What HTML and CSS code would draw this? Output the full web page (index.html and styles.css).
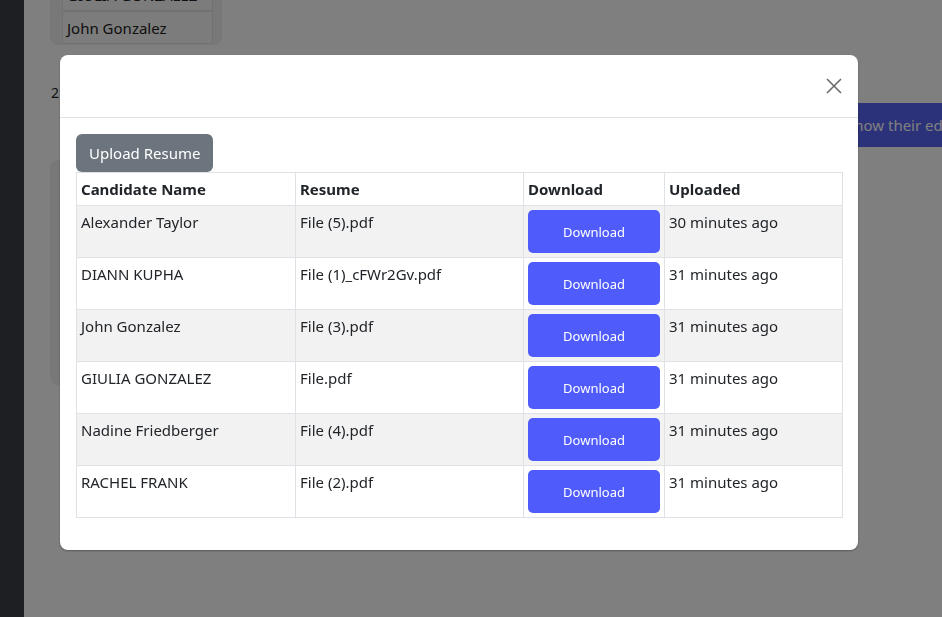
FILE: index.html
```html
<!DOCTYPE html>
<html>
<head>
<meta charset="utf-8">
<link rel="stylesheet" href="styles.css">
</head>
<body>
<div class="page">
  <aside class="sidebar"></aside>
  <main class="content">
    <div class="card card-top">
      <div class="cell">GIULIA GONZALEZ</div>
      <div class="cell">John Gonzalez</div>
    </div>
    <div class="count">2</div>
    <div class="banner">Show their education</div>
    <div class="card card-second"></div>
  </main>
</div>

<div class="backdrop"></div>

<div class="modal">
  <div class="modal-header">
    <button class="close" aria-label="Close">
      <svg width="16" height="16" viewBox="0 0 16 16"><path d="M1 1L15 15M15 1L1 15" stroke="#6c6c6c" stroke-width="1.6" fill="none"/></svg>
    </button>
  </div>
  <div class="modal-body">
    <button class="btn-upload">Upload Resume</button>
    <table class="tbl">
      <colgroup>
        <col class="c1"><col class="c2"><col class="c3"><col class="c4">
      </colgroup>
      <thead>
        <tr><th>Candidate Name</th><th>Resume</th><th>Download</th><th>Uploaded</th></tr>
      </thead>
      <tbody>
        <tr><td>Alexander Taylor</td><td>File (5).pdf</td><td><button class="btn-dl">Download</button></td><td>30 minutes ago</td></tr>
        <tr><td>DIANN KUPHA</td><td>File (1)_cFWr2Gv.pdf</td><td><button class="btn-dl">Download</button></td><td>31 minutes ago</td></tr>
        <tr><td>John Gonzalez</td><td>File (3).pdf</td><td><button class="btn-dl">Download</button></td><td>31 minutes ago</td></tr>
        <tr><td>GIULIA GONZALEZ</td><td>File.pdf</td><td><button class="btn-dl">Download</button></td><td>31 minutes ago</td></tr>
        <tr><td>Nadine Friedberger</td><td>File (4).pdf</td><td><button class="btn-dl">Download</button></td><td>31 minutes ago</td></tr>
        <tr><td>RACHEL FRANK</td><td>File (2).pdf</td><td><button class="btn-dl">Download</button></td><td>31 minutes ago</td></tr>
      </tbody>
    </table>
  </div>
</div>
</body>
</html>
```

FILE: styles.css
```css
* { box-sizing: border-box; }
html, body { margin: 0; padding: 0; height: 100%; overflow: hidden; }
body {
  font-family: "Noto Sans", "Open Sans", sans-serif;
  font-size: 15px;
  color: #212529;
  background: #fff;
}
.page { display: flex; height: 100%; }
.sidebar { width: 24px; flex: none; background: #3d3f45; }
.content { flex: 1; position: relative; }
.card-top {
  position: absolute; left: 26px; top: -30px; width: 172px; height: 75px;
  background: #f0f0f1; border-radius: 8px; padding: 8px 9px 0 12px;
}
.cell {
  height: 33px; line-height: 33px; padding-left: 4px;
  background: #f9f9f9; border: 1px solid #e4e4e4; color: #222;
  font-size: 15px; white-space: nowrap; overflow: hidden;
}
.count { position: absolute; left: 27px; top: 83px; font-size: 14px; }
.banner {
  position: absolute; left: 600px; right: 0; top: 103px; height: 44px;
  background: #5664f2; color: #fff; line-height: 44px; padding-left: 222px;
  white-space: nowrap; overflow: hidden; font-size: 15px;
}
.card-second {
  position: absolute; left: 26px; top: 160px; width: 172px; height: 225px;
  background: #f0f0f1; border-radius: 8px;
}
.backdrop { position: fixed; inset: 0; background: rgba(0,0,0,0.5); }
.modal {
  position: fixed; left: 60px; top: 55px; width: 798px;
  background: #fff; border-radius: 8px; box-shadow: 0 1px 2px rgba(0,0,0,0.3);
}
.modal-header {
  height: 63px; border-bottom: 1px solid #dee2e6;
  display: flex; justify-content: flex-end; align-items: center; padding-right: 16px;
}
.close {
  border: 0; background: transparent; padding: 0; width: 16px; height: 16px;
  display: flex;
}
.modal-body { padding: 16px; }
.btn-upload {
  font-family: inherit; font-size: 15px; color: #fff; background: #6c757d;
  border: 0; border-radius: 6px; height: 38px; padding: 0 13px; line-height: 38px;
  display: block;
}
.tbl {
  width: 766px; border-collapse: collapse; margin-bottom: 16px; table-layout: fixed;
}
.c1 { width: 219px; } .c2 { width: 228px; } .c3 { width: 141px; } .c4 { width: 178px; }
.tbl th, .tbl td {
  border: 1px solid #dee2e6; padding: 4px; text-align: left; vertical-align: top;
  line-height: 24px; font-size: 15px;
}
.tbl th { font-weight: 700; }
.tbl tbody tr:nth-child(odd) td { background: #f2f2f2; }
.btn-dl {
  display: block; width: 100%; height: 43px; border: 0; border-radius: 5px;
  background: #4f5bfb; color: #fff; font-family: inherit; font-size: 13px;
  padding-top: 2px;
}
```
